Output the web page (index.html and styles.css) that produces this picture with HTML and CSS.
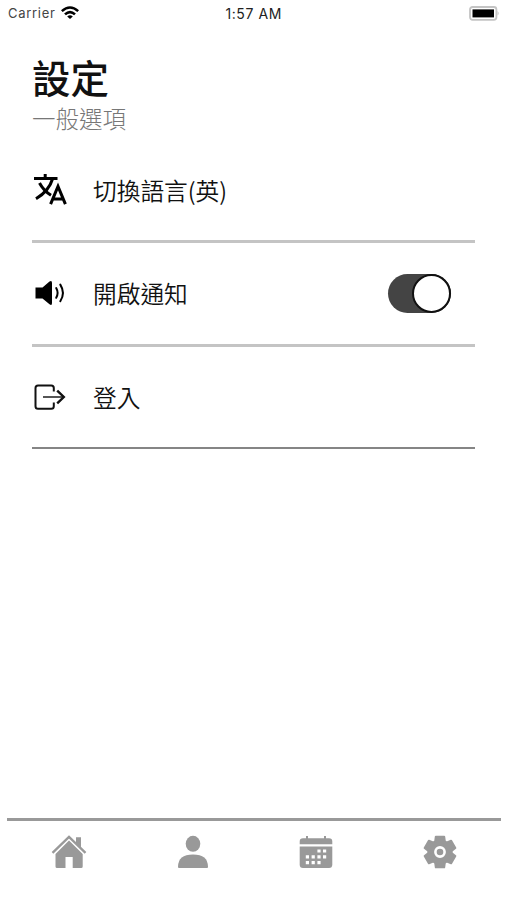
FILE: index.html
```
<!DOCTYPE html>
<html lang="zh-Hant">

<head>
    <meta charset="UTF-8">
    <title>設定</title>
    <link rel="stylesheet" href="styles.css">
</head>

<body>
    <div class="status">
        <div class="carrier">
            <span>Carrier</span>
            <svg class="wifi" viewBox="0 0 18 13">
                <path d="M0 4.3 Q9 -3.6 18 4.3 L16.3 6.1 Q9 -.4 1.7 6.1Z" />
                <path d="M3.1 7.4 Q9 2.3 14.9 7.4 L13.1 9.2 Q9 5.8 4.9 9.2Z" />
                <path d="M6.2 10.4 Q9 8.3 11.8 10.4 L9 13Z" />
            </svg>
        </div>
        <div class="time">1:57 AM</div>
        <svg class="battery" viewBox="0 0 31 15">
            <rect x="1" y="1" width="26.4" height="12.8" rx="2.5" fill="#fff" stroke="#c4c4c4" stroke-width="1.8" />
            <rect x="3.5" y="3.4" width="21.5" height="8" fill="#000" />
            <path d="M28.6 5 Q30.6 7.3 28.6 9.6Z" fill="#bbb" />
        </svg>
    </div>

    <main class="content">
        <h1>設定</h1>
        <h2>一般選項</h2>

        <div class="row first">
            <svg class="icon" viewBox="0 0 36 36" fill="none" stroke="#000" stroke-width="3">
                <path d="M2 6.5H25.5M13.2 2V6.5M20.7 6.5Q17 19 4 26.8M7.5 11Q11.5 18.5 19 23.3" />
                <path d="M18.6 32.2L26 14.5L33.4 32.2M21 27H31" />
            </svg>
            <span>切換語言(英)</span>
        </div>

        <div class="row">
            <svg class="icon" viewBox="0 0 36 36">
                <path d="M3.5 12.4H10.5L17.5 6.5Q20 5 20 8V28Q20 31 17.5 29.2L10.5 23.5H3.5Z" />
                <path d="M24.2 13.1Q27 18 24.2 22.8M28.3 9.6Q33.6 18 28.3 26.2" fill="none" stroke="#000" stroke-width="2" stroke-linecap="round" />
            </svg>
            <span>開啟通知</span>
            <div class="switch"><div class="knob"></div></div>
        </div>

        <div class="row last">
            <svg class="icon" viewBox="0 0 36 36" fill="none" stroke="#111" stroke-width="2">
                <path d="M21.8 12.5V9Q21.8 6.5 19.3 6.5H6Q3.5 6.5 3.5 9V27.2Q3.5 29.7 6 29.7H19.3Q21.8 29.7 21.8 27.2V23.5" />
                <path d="M11 18H31.5" stroke="#555" />
                <path d="M25.2 11.7L31.8 18L25.2 24.3" stroke-width="2.4" />
            </svg>
            <span>登入</span>
        </div>
    </main>

    <nav class="tabs">
        <div class="tab">
            <svg viewBox="0 0 36 36">
                <path d="M25 9V3.2H30V13.5Z" />
                <path d="M1.5 18.8L18 2.8L34.5 18.8" fill="none" stroke="#999" stroke-width="2.3" />
                <path d="M18 6.6L31.7 20V32.5Q31.7 34 30.2 34H21.7V23H14.5V34H6Q4.5 34 4.5 32.5V20Z" />
            </svg>
        </div>
        <div class="tab">
            <svg viewBox="0 0 36 36">
                <ellipse cx="18" cy="9.8" rx="7.3" ry="8" />
                <path d="M3 33Q3 20.6 18 20.6T33 33Q33 34 32 34H4Q3 34 3 33Z" />
            </svg>
        </div>
        <div class="tab">
            <svg viewBox="0 0 36 36">
                <path d="M1.7 10.2V7.5Q1.7 4.3 5 4.3H8V2H10V4.3H26V2H28V4.3H31Q34.3 4.3 34.3 7.5V10.2Z" />
                <path d="M1.7 12.4H34.3V30.5Q34.3 34 31 34H5Q1.7 34 1.7 30.5Z" />
                <path d="M19.4 17H22.6M25 17H28.2M7.8 22.8H11M13.6 22.8H16.8M19.4 22.8H22.6M25 22.8H28.2M7.8 28.6H11M13.6 28.6H16.8M19.4 28.6H22.6" fill="none" stroke="#fff" stroke-width="3.2" />
            </svg>
        </div>
        <div class="tab">
            <svg viewBox="0 0 36 36">
                <g stroke="#999" stroke-width="2" stroke-linejoin="round">
                    <circle cx="18" cy="18" r="11.6" />
                    <path id="tooth" d="M13 9L13.8 2.7H22.2L23 9V27L22.2 33.3H13.8L13 27Z" />
                    <use href="#tooth" transform="rotate(60 18 18)" />
                    <use href="#tooth" transform="rotate(120 18 18)" />
                </g>
                <circle cx="18" cy="18" r="4.6" fill="#999" stroke="#fff" stroke-width="2.6" />
            </svg>
        </div>
    </nav>
</body>

</html>
```

FILE: styles.css
```
* {
    box-sizing: border-box;
}

body {
    margin: 0;
    height: 900px;
    display: flex;
    flex-direction: column;
    background-color: #fff;
    color: #111;
    font-family: "Noto Sans CJK TC", sans-serif;
    overflow: hidden;
}

.status {
    display: flex;
    justify-content: space-between;
    height: 27px;
    padding: 0 6px 1px 8px;
    align-items: center;
    font-family: Inter, sans-serif;
    font-size: 13px;
}

.carrier {
    display: flex;
    align-items: center;
    gap: 5px;
    flex: 1;
    color: #444;
    letter-spacing: 0.7px;
}

.wifi {
    width: 18px;
    height: 13px;
    margin-top: -1px;
}

.time {
    font-size: 14px;
    letter-spacing: 0.6px;
    color: #222;
}

.battery {
    flex: none;
    width: 31px;
    height: 15px;
    margin-left: 187px;
}

.content {
    flex: 1;
    padding: 25px 31px 0 32px;
}

h1 {
    margin: 0;
    font-size: 38.5px;
    line-height: 48px;
    font-weight: 500;
}

h2 {
    margin: 0 0 4px;
    font-size: 23.5px;
    line-height: 36px;
    font-weight: 300;
    color: #777;
}

.row {
    display: flex;
    align-items: center;
    height: 104px;
    padding-bottom: 1px;
    border-bottom: 3px solid #c4c4c4;
    font-size: 23.7px;
    font-weight: 350;
}

.row span {
    margin-left: 25px;
}

.row.first {
    height: 103px;
    padding-bottom: 0;
}

.row.last {
    height: 102px;
    border-bottom: 2px solid #858585;
}

.icon {
    width: 36px;
    height: 36px;
}

.switch {
    display: flex;
    justify-content: flex-end;
    width: 63px;
    height: 39px;
    margin-left: auto;
    margin-right: 24px;
    border-radius: 20px;
    background-color: #444;
}

.knob {
    width: 39px;
    height: 39px;
    border: 2px solid #111;
    border-radius: 50%;
    background-color: #fff;
}

.tabs {
    display: flex;
    justify-content: space-between;
    height: 82px;
    margin: 0 5px 0 7px;
    padding: 13px 43px 0 44px;
    border-top: 3px solid #999;
}

.tab svg {
    width: 36px;
    height: 36px;
    fill: #999;
}
```
